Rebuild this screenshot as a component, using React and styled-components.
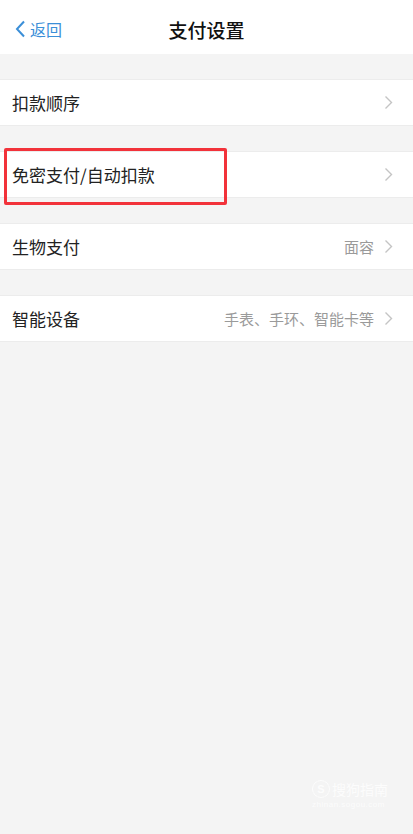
import React from 'react'
import styled, { createGlobalStyle } from 'styled-components'

const Global = createGlobalStyle`
    html, body {
        margin: 0;
        padding: 0;
        background: #f4f4f4;
    }
    body {
        font-family: "Noto Sans CJK SC", "Noto Sans", sans-serif;
    }
`

const Page = styled.div`
    position: relative;
    width: 413px;
    height: 834px;
    background: #f4f4f4;
    overflow: hidden;
`

const NavBar = styled.div`
    height: 54px;
    box-sizing: border-box;
    padding-top: 4px;
    background: #fff;
    display: grid;
    grid-template-columns: 1fr auto 1fr;
    align-items: center;
`

const Back = styled.div`
    display: flex;
    align-items: center;
    gap: 4px;
    padding-left: 15px;
    color: #3b8fd8;
    font-size: 16px;
`

const Title = styled.div`
    font-size: 19px;
    font-weight: 500;
    color: #111;
`

const Group = styled.div`
    margin-top: 25px;
    background: #fff;
    border-top: 1px solid #ececec;
    border-bottom: 1px solid #ececec;
`

const Row = styled.div`
    height: 45px;
    display: flex;
    align-items: center;
    padding: 0 20px 0 12px;
`

const Label = styled.div`
    flex: 1;
    font-size: 17px;
    color: #222;
`

const Detail = styled.div`
    font-size: 15px;
    color: #9a9a9a;
    margin-right: 10px;
`

const Highlight = styled.div`
    position: absolute;
    left: 4px;
    top: 148px;
    width: 217px;
    height: 51px;
    border: 3px solid #f2323a;
    border-radius: 2px;
`

const Watermark = styled.div`
    position: absolute;
    right: 25px;
    bottom: 24px;
    display: flex;
    flex-direction: column;
    align-items: flex-start;
    color: #ffffff;
    opacity: 0.8;
`

const MarkTop = styled.div`
    display: flex;
    align-items: center;
    gap: 2px;
    font-size: 14px;
    line-height: 18px;
`

const MarkBadge = styled.span`
    width: 16px;
    height: 16px;
    border-radius: 50%;
    border: 1.5px solid #fff;
    font-size: 11px;
    font-weight: 700;
    display: flex;
    align-items: center;
    justify-content: center;
    font-family: "Liberation Sans", sans-serif;
`

const MarkUrl = styled.div`
    font-size: 8px;
    line-height: 10px;
    letter-spacing: 0.5px;
    font-family: "Liberation Sans", sans-serif;
    margin-top: 2px;
`

const Chevron = () => (
    <svg width="9" height="15" viewBox="0 0 9 15">
        <path d="M1.5 1.5 L7.5 7.5 L1.5 13.5" fill="none" stroke="#c4c4c4" strokeWidth="1.4" />
    </svg>
)

const BackArrow = () => (
    <svg width="11" height="18" viewBox="0 0 11 18">
        <path d="M9 1.5 L2 9 L9 16.5" fill="none" stroke="#3b8fd8" strokeWidth="2" />
    </svg>
)

const rows = [
    { label: '扣款顺序' },
    { label: '免密支付/自动扣款' },
    { label: '生物支付', detail: '面容' },
    { label: '智能设备', detail: '手表、手环、智能卡等' },
]

const App = () => (
    <Page>
        <Global />
        <NavBar>
            <Back>
                <BackArrow />
                返回
            </Back>
            <Title>支付设置</Title>
            <div />
        </NavBar>
        {rows.map(r => (
            <Group key={r.label}>
                <Row>
                    <Label>{r.label}</Label>
                    {r.detail && <Detail>{r.detail}</Detail>}
                    <Chevron />
                </Row>
            </Group>
        ))}
        <Highlight />
        <Watermark>
            <MarkTop>
                <MarkBadge>S</MarkBadge>
                搜狗指南
            </MarkTop>
            <MarkUrl>zhinan.sogou.com</MarkUrl>
        </Watermark>
    </Page>
)

export default App
